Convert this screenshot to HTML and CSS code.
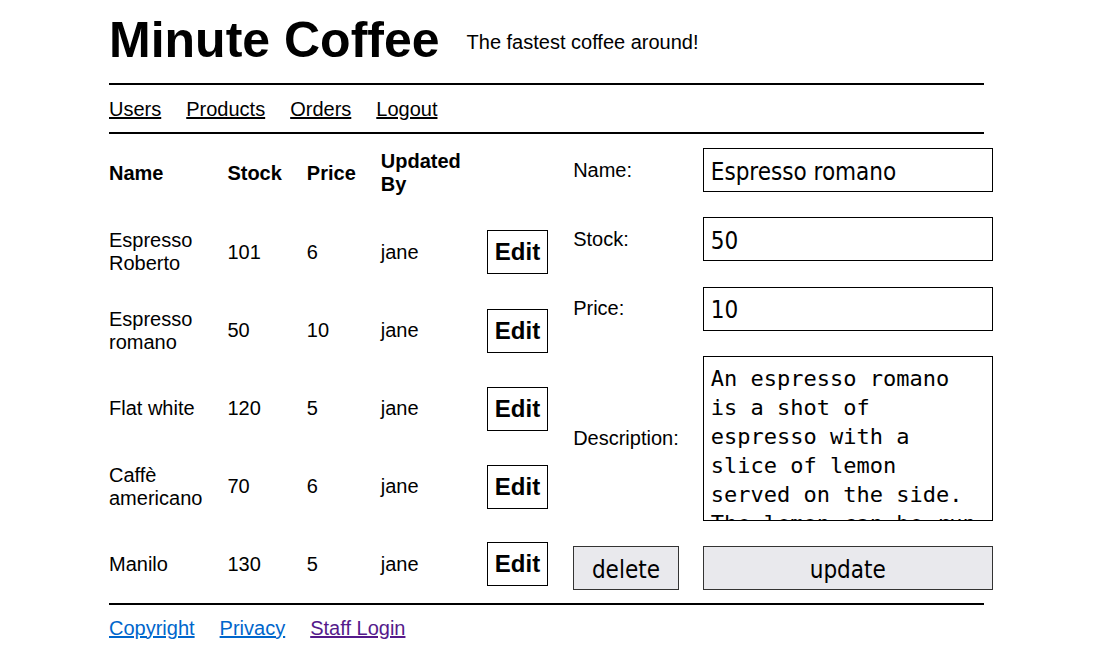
FILE: index.html
```html
<!DOCTYPE html>
<html lang="en">
<head>
<meta charset="utf-8">
<title>Minute Coffee</title>
<link rel="stylesheet" href="styles.css">
</head>
<body>
<div class="page">
  <header class="site-header">
    <h1 class="brand">Minute Coffee</h1>
    <p class="tagline">The fastest coffee around!</p>
  </header>
  <nav class="nav">
    <a href="#">Users</a>
    <a href="#">Products</a>
    <a href="#">Orders</a>
    <a href="#">Logout</a>
  </nav>
  <main class="main">
    <table class="products">
      <thead>
        <tr><th>Name</th><th>Stock</th><th>Price</th><th>Updated By</th><th></th></tr>
      </thead>
      <tbody>
        <tr><td>Espresso Roberto</td><td>101</td><td>6</td><td>jane</td><td><button class="edit">Edit</button></td></tr>
        <tr><td>Espresso romano</td><td>50</td><td>10</td><td>jane</td><td><button class="edit">Edit</button></td></tr>
        <tr><td>Flat white</td><td>120</td><td>5</td><td>jane</td><td><button class="edit">Edit</button></td></tr>
        <tr><td>Caffè americano</td><td>70</td><td>6</td><td>jane</td><td><button class="edit">Edit</button></td></tr>
        <tr><td>Manilo</td><td>130</td><td>5</td><td>jane</td><td><button class="edit">Edit</button></td></tr>
      </tbody>
    </table>
    <form class="editor">
      <label class="lbl" for="f-name">Name:</label>
      <input class="field" id="f-name" type="text" value="Espresso romano">
      <label class="lbl" for="f-stock">Stock:</label>
      <input class="field" id="f-stock" type="text" value="50">
      <label class="lbl" for="f-price">Price:</label>
      <input class="field" id="f-price" type="text" value="10">
      <label class="lbl" for="f-desc">Description:</label>
      <textarea class="desc" id="f-desc">An espresso romano is a shot of espresso with a slice of lemon served on the side. The lemon can be run along the rim of the cup as a way to accentuate the espresso's sweetness.</textarea>
      <button class="action" type="button">delete</button>
      <button class="action" type="button">update</button>
    </form>
  </main>
  <footer class="footer">
    <a class="link" href="#">Copyright</a>
    <a class="link" href="#">Privacy</a>
    <a class="link visited" href="#">Staff Login</a>
  </footer>
</div>
</body>
</html>
```

FILE: styles.css
```css
* { box-sizing: border-box; }

body {
  margin: 0;
  background: #fff;
  color: #000;
  font-family: "Liberation Sans", Arial, sans-serif;
  font-size: 20px;
}

.page {
  width: 875px;
  margin-left: 109px;
}

.site-header {
  display: flex;
  align-items: center;
  gap: 27px;
  padding: 11px 0 14px;
  border-bottom: 2px solid #000;
}

.brand {
  margin: 0;
  font-size: 50px;
  line-height: 58px;
  font-weight: bold;
}

.tagline {
  margin: 5px 0 0;
  font-size: 20px;
  line-height: 23px;
}

.nav {
  display: flex;
  gap: 25px;
  padding: 13px 0 11px;
  line-height: 23px;
  border-bottom: 2px solid #000;
}

.nav a {
  color: #000;
  text-decoration: underline;
}

.main {
  display: flex;
  align-items: flex-start;
}

.products {
  flex-shrink: 0;
  width: min-content;
  border-collapse: collapse;
  border-spacing: 0;
}

.products th,
.products td {
  padding: 16.4px 25px 16.4px 0;
  text-align: left;
  vertical-align: middle;
  line-height: 23px;
}

.products th:last-child,
.products td:last-child {
  padding-left: 1px;
}

.products th { font-weight: bold; }

.edit {
  display: block;
  margin: 0;
  padding: 7px 7px;
  background: #fff;
  border: 1px solid #000;
  color: #000;
  font-family: "Liberation Sans", Arial, sans-serif;
  font-size: 24px;
  font-weight: bold;
  line-height: 28px;
  height: 44px;
}

.editor {
  flex-shrink: 0;
  display: grid;
  grid-template-columns: auto 290px;
  column-gap: 24px;
  row-gap: 25.3px;
  align-items: center;
  padding-top: 14px;
}

.lbl {
  font-size: 20px;
  line-height: 23px;
}

.field {
  height: 44px;
  width: 290px;
  margin: 0;
  padding: 3px 7px 0;
  border: 1px solid #000;
  background: #fff;
  color: #000;
  font-family: "DejaVu Sans Condensed", "DejaVu Sans", sans-serif;
  font-size: 24px;
}

.desc {
  display: block;
  width: 290px;
  height: 165px;
  margin: 0;
  padding: 7px 11px 0 7px;
  border: 1px solid #000;
  background: #fff;
  color: #000;
  font-family: "DejaVu Sans Mono", monospace;
  font-size: 22px;
  line-height: 29px;
  resize: none;
  overflow: hidden;
}

.action {
  height: 44px;
  margin: 0;
  padding: 4px 0 0;
  background: #e9e9ed;
  border: 1px solid #333;
  color: #000;
  font-family: "DejaVu Sans Condensed", "DejaVu Sans", sans-serif;
  font-size: 24px;
}

.footer {
  display: flex;
  gap: 25px;
  padding-top: 12px;
  line-height: 23px;
  border-top: 2px solid #000;
}

.link { color: #0066cc; text-decoration: underline; }
.link.visited { color: #551a8b; }
```
